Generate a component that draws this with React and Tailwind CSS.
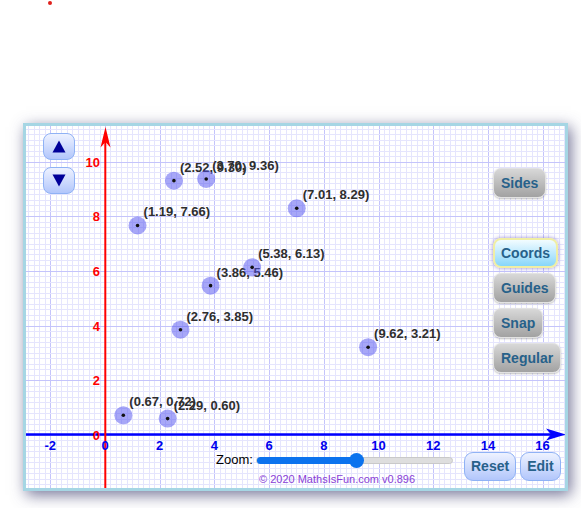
import React from 'react'

const S = 27.35
const OX = 105
const OY = 435
const px = (x) => OX + x * S
const py = (y) => OY - y * S

const points = [
  [2.52, 9.30], [3.70, 9.36], [7.01, 8.29], [1.19, 7.66], [5.38, 6.13],
  [3.86, 5.46], [2.76, 3.85], [9.62, 3.21], [0.67, 0.72], [2.29, 0.60],
]

const fmt = (n) => n.toFixed(2)
const font = "'Liberation Sans', Arial, sans-serif"

function Grid() {
  const lines = []
  // vertical
  for (let k = -15; k <= 85; k++) {
    const x = Math.round(px(k * 0.2)) + 0.5
    if (x < 26 || x > 565) continue
    const major = k % 10 === 0
    lines.push(<line key={'v' + k} x1={x} y1={126} x2={x} y2={488} stroke={major ? '#c4c4fb' : '#e5e5fd'} strokeWidth="1" />)
  }
  for (let k = -10; k <= 60; k++) {
    const y = Math.round(py(k * 0.2)) + 0.5
    if (y < 126 || y > 488) continue
    const major = k % 10 === 0
    lines.push(<line key={'h' + k} x1={26} y1={y} x2={565} y2={y} stroke={major ? '#c4c4fb' : '#e5e5fd'} strokeWidth="1" />)
  }
  return <g>{lines}</g>
}

function Graph() {
  const xTicks = [-2, 0, 2, 4, 6, 8, 10, 12, 14, 16]
  const yTicks = [0, 2, 4, 6, 8, 10]
  return (
    <svg width="539" height="362" viewBox="26 126 539 362" className="block" style={{ fontFamily: font }}>
      <rect x="26" y="126" width="539" height="362" fill="#fff" />
      <Grid />
      {/* x axis */}
      <line x1="26" y1="434.5" x2="556" y2="434.5" stroke="#0000ff" strokeWidth="2.5" />
      <path d="M566,434.5 L546,428.5 L551,434.5 L546,440.5 Z" fill="#0000ff" />
      {/* y axis */}
      <line x1="105.3" y1="488" x2="105.3" y2="138" stroke="#ff0000" strokeWidth="2" />
      <path d="M105.5,127 L100.5,147.5 L105.5,142 L110.5,147.5 Z" fill="#ff0000" />
      {xTicks.map((t) => (
        <text key={'x' + t} x={px(t)} y="449.5" textAnchor="middle" fontSize="13" fontWeight="bold" fill="#0000ee">{t}</text>
      ))}
      {yTicks.map((t) => (
        <text key={'y' + t} x="100" y={py(t) + 5} textAnchor="end" fontSize="13" fontWeight="bold" fill="#ff0000">{t}</text>
      ))}
      {points.map(([x, y], i) => (
        <text key={'l' + i} x={px(x) + 6} y={py(y) - 9} fontSize="13" fontWeight="bold" fill="#2e2e2e">
          ({fmt(x)}, {fmt(y)})
        </text>
      ))}
      {points.map(([x, y], i) => (
        <g key={'p' + i}>
          <circle cx={px(x)} cy={py(y)} r="9" fill="rgba(80,80,240,0.5)" />
          <circle cx={px(x)} cy={py(y)} r="1.8" fill="#111" />
        </g>
      ))}
    </svg>
  )
}

function ArrowBtn({ down }) {
  return (
    <button className="w-[32px] h-[27px] rounded-[8px] border border-[#8fb2f5] bg-linear-to-b from-[#eef2ff] to-[#b2c6fb] flex items-center justify-center">
      <svg width="14" height="13" viewBox="0 0 14 13">
        <path d={down ? 'M0.5 0.5 L13.5 0.5 L7 12.5 Z' : 'M7 0.5 L13.5 12.5 L0.5 12.5 Z'} fill="#000099" />
      </svg>
    </button>
  )
}

function GrayBtn({ children, active }) {
  const cls = active
    ? 'border-2 border-[#f0eea4] bg-linear-to-b from-[#f2fcff] to-[#86d6fa] shadow-[0_0_4px_rgba(110,90,200,0.7)] px-[6px]'
    : 'border border-[#e2e2e2] bg-linear-to-b from-[#d8d8d8] to-[#a2a2a2] shadow-[0_1px_2px_rgba(0,0,0,0.25)] px-[7px]'
  return (
    <button className={`h-[30px] rounded-[8px] text-[14px] font-bold text-[#27618a] ${cls}`}>
      {children}
    </button>
  )
}

function BlueBtn({ children }) {
  return (
    <button className="h-[29px] px-[6px] rounded-[9px] border border-[#8fb2f5] bg-linear-to-b from-[#eef2ff] to-[#b2c6fb] text-[14px] font-bold text-[#27618a]">
      {children}
    </button>
  )
}

export default function App() {
  return (
    <div className="w-[581px] h-[508px] bg-white overflow-hidden font-['Liberation_Sans',Arial,sans-serif]">
      <div className="w-[4px] h-[4px] rounded-full bg-[#e0201c] ml-[48px] mt-[1px]" />
      <div className="relative ml-[23px] mt-[118px] w-[545px] h-[368px] border-[3px] border-[#a6d6e4] shadow-[3px_4px_14px_rgba(60,60,110,0.7)]">
        <Graph />

        <div className="absolute left-[17px] top-[7px] flex flex-col gap-[7px]">
          <ArrowBtn />
          <ArrowBtn down />
        </div>

        <div className="absolute left-[467px] top-[42px]">
          <GrayBtn>Sides</GrayBtn>
        </div>

        <div className="absolute left-[467px] top-[112px] flex flex-col items-start gap-[5px]">
          <GrayBtn active>Coords</GrayBtn>
          <GrayBtn>Guides</GrayBtn>
          <GrayBtn>Snap</GrayBtn>
          <GrayBtn>Regular</GrayBtn>
        </div>

        <div className="absolute left-[190px] top-[324px] h-[20px] flex items-center">
          <span className="text-[13px] text-black">Zoom:</span>
          <div className="relative ml-[3px] w-[197px] h-[7px] rounded-full bg-[#dedede] border border-[#c9c9c9]">
            <div className="absolute left-0 top-[-1px] h-[7px] w-[100px] rounded-full bg-[#0b72ee]" />
            <div className="absolute left-[92px] top-[-5px] w-[15px] h-[15px] rounded-full bg-[#0b72ee]" />
          </div>
        </div>

        <div className="absolute left-[438px] top-[326px] flex gap-[4px]">
          <BlueBtn>Reset</BlueBtn>
          <BlueBtn>Edit</BlueBtn>
        </div>

        <div className="absolute left-[233px] top-[346px] text-[11px] leading-[14px] text-[#8a3ed6]">
          © 2020 MathsIsFun.com v0.896
        </div>
      </div>
    </div>
  )
}
